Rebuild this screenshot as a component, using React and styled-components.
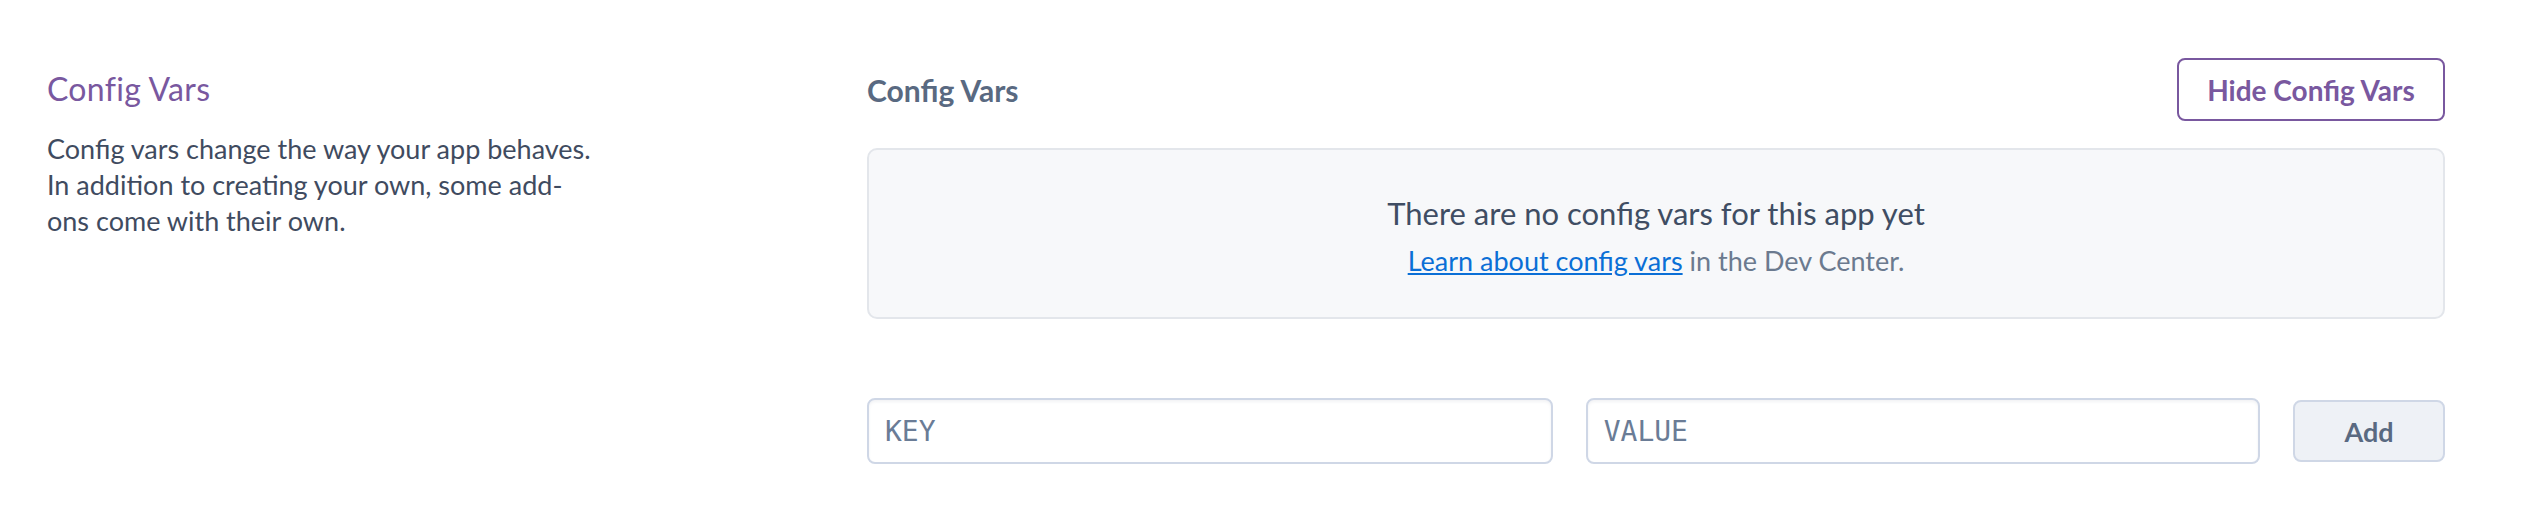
import React from "react";
import styled, { createGlobalStyle } from "styled-components";

const GlobalStyle = createGlobalStyle`
	body {
		margin: 0;
		background: #ffffff;
		font-family: Lato, "Liberation Sans", sans-serif;
	}
`;

const Page = styled.div`
	display: grid;
	grid-template-columns: 820px 1fr;
	padding: 58px 79px 40px 47px;
`;

const Intro = styled.div`
	padding-top: 11px;
`;

const IntroTitle = styled.h2`
	margin: 0;
	font-size: 32px;
	line-height: 40px;
	font-weight: 400;
	letter-spacing: 0.3px;
	color: #79589f;
`;

const IntroText = styled.p`
	margin: 22px 0 0;
	width: 554px;
	font-size: 27px;
	line-height: 36px;
	color: #3f4b60;
`;

const Panel = styled.div`
	display: flex;
	flex-direction: column;
`;

const PanelHeader = styled.div`
	display: flex;
	align-items: center;
	justify-content: space-between;
`;

const PanelLabel = styled.h3`
	margin: 0;
	font-size: 30px;
	line-height: 36px;
	font-weight: 700;
	color: #596981;
`;

const OutlineButton = styled.button`
	width: 268px;
	height: 63px;
	background: #ffffff;
	border: 2px solid #79589f;
	border-radius: 8px;
	font-family: inherit;
	font-size: 28px;
	font-weight: 700;
	color: #79589f;
	cursor: pointer;
`;

const EmptyBox = styled.div`
	margin-top: 27px;
	padding: 43px 20px 38px;
	background: #f7f8fa;
	border: 2px solid #e3e6eb;
	border-radius: 10px;
	text-align: center;
`;

const EmptyTitle = styled.div`
	font-size: 31px;
	line-height: 40px;
	color: #3f4d63;
`;

const EmptyHint = styled.div`
	margin-top: 10px;
	font-size: 27px;
	line-height: 36px;
	color: #6b7a8f;

	a {
		color: #0b6fd6;
		text-decoration: underline;
	}
`;

const FormRow = styled.div`
	display: flex;
	align-items: center;
	gap: 33px;
	margin-top: 79px;
`;

const Field = styled.input`
	flex: ${(props) => props.$grow} 1 0;
	min-width: 0;
	height: 66px;
	box-sizing: border-box;
	padding: 0 16px;
	border: 2px solid #cfd7e6;
	border-radius: 8px;
	box-shadow: inset 0 2px 3px rgba(89, 105, 129, 0.08);
	font-family: "DejaVu Sans Mono", "Liberation Mono", monospace;
	font-size: 28px;
	color: #3f4d63;
	outline: none;

	&::placeholder {
		color: #6a7c96;
	}
`;

const AddButton = styled.button`
	flex: none;
	width: 152px;
	height: 62px;
	background: #eef1f6;
	border: 2px solid #cfd7e6;
	border-radius: 8px;
	font-family: inherit;
	font-size: 27px;
	font-weight: 700;
	color: #596981;
	cursor: pointer;
`;

const App = () => {
	return (
		<>
			<GlobalStyle />
			<Page>
				<Intro>
					<IntroTitle>Config Vars</IntroTitle>
					<IntroText>
						Config vars change the way your app behaves. In addition to creating your own, some add-ons come with their own.
					</IntroText>
				</Intro>
				<Panel>
					<PanelHeader>
						<PanelLabel>Config Vars</PanelLabel>
						<OutlineButton>Hide Config Vars</OutlineButton>
					</PanelHeader>
					<EmptyBox>
						<EmptyTitle>There are no config vars for this app yet</EmptyTitle>
						<EmptyHint>
							<a href="#config-vars">Learn about config vars</a> in the Dev Center.
						</EmptyHint>
					</EmptyBox>
					<FormRow>
						<Field $grow={686} placeholder="KEY" />
						<Field $grow={674} placeholder="VALUE" />
						<AddButton>Add</AddButton>
					</FormRow>
				</Panel>
			</Page>
		</>
	);
};

export default App;
